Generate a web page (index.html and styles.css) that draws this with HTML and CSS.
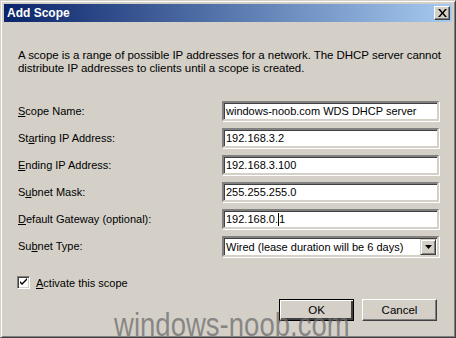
FILE: index.html
```html
<!DOCTYPE html>
<html lang="en">
<head>
  <meta charset="UTF-8">
  <meta name="viewport" content="width=device-width, initial-scale=1.0">
  <title>Add Scope</title>
  <link rel="stylesheet" href="styles.css">
</head>
<body>
  <div class="window">
    <div class="titlebar">
      <span class="title">Add Scope</span>
      <button class="close-button">
        <svg width="9" height="8" viewBox="0 0 9 8">
          <path d="M0 0h2l2.5 3 2.5-3h2l-3.5 4 3.5 4h-2l-2.5-3-2.5 3h-2l3.5-4z" fill="#000"/>
        </svg>
      </button>
    </div>

    <div class="content">
      <p class="intro">A scope is a range of possible IP addresses for a network. The DHCP server cannot<br>distribute IP addresses to clients until a scope is created.</p>

      <!-- Scope fields -->
      <div class="fields">
        <label for="scopeName"><u>S</u>cope Name:</label>
        <div class="textbox" id="scopeName">windows-noob.com WDS DHCP server</div>

        <label for="startIp">St<u>a</u>rting IP Address:</label>
        <div class="textbox" id="startIp">192.168.3.2</div>

        <label for="endIp"><u>E</u>nding IP Address:</label>
        <div class="textbox" id="endIp">192.168.3.100</div>

        <label for="mask">S<u>u</u>bnet Mask:</label>
        <div class="textbox" id="mask">255.255.255.0</div>

        <label for="gateway"><u>D</u>efault Gateway (optional):</label>
        <div class="textbox" id="gateway">192.168.0.<span class="caret"></span>1</div>

        <label for="subnetType">Su<u>b</u>net Type:</label>
        <div class="combo" id="subnetType">
          <span class="combo-text">Wired (lease duration will be 6 days)</span>
          <span class="combo-arrow">
            <svg width="7" height="4" viewBox="0 0 7 4"><path d="M0 0h7l-3.5 4z" fill="#000"/></svg>
          </span>
        </div>
      </div>

      <div class="check-row">
        <span class="checkbox">
          <svg width="9" height="9" viewBox="0 0 9 9"><path d="M1 3l2 2 5-5v2l-5 5-2-2z" fill="#000"/></svg>
        </span>
        <span><u>A</u>ctivate this scope</span>
      </div>

      <div class="buttons">
        <button class="button default">OK</button>
        <button class="button">Cancel</button>
      </div>
    </div>

    <div class="watermark">windows-noob.com</div>
  </div>
</body>
</html>
```

FILE: styles.css
```css
body {
  margin: 0;
  padding: 0;
  background-color: #d4d0c8;
  font-family: "Liberation Sans", Arial, sans-serif;
  font-size: 11px;
  color: #000;
}

.window {
  position: relative;
  box-sizing: border-box;
  width: 456px;
  height: 338px;
  overflow: hidden;
  padding: 3px;
  background-color: #d4d0c8;
  border-top: 1px solid #d4d0c8;
  border-left: 1px solid #d4d0c8;
  border-right: 1px solid #404040;
  border-bottom: 1px solid #404040;
  box-shadow: inset 1px 1px 0 #fff, inset -1px -1px 0 #808080;
}

.titlebar {
  display: flex;
  align-items: center;
  justify-content: space-between;
  height: 18px;
  padding: 0 2px 0 3px;
  background: linear-gradient(to right, #0a246a, #a6caf0);
}

.title {
  color: #fff;
  font-weight: bold;
  font-size: 12px;
}

.close-button {
  display: flex;
  align-items: center;
  justify-content: center;
  width: 16px;
  height: 14px;
  padding: 0;
  background-color: #d4d0c8;
  border: 1px solid;
  border-color: #fff #404040 #404040 #fff;
  box-shadow: inset -1px -1px 0 #808080;
}

.content {
  padding: 0 14px 0 14px;
}

.intro {
  margin: 27px 0 0 0;
  line-height: 13px;
  font-size: 11.5px;
  letter-spacing: -0.05px;
  white-space: nowrap;
}

.fields {
  display: grid;
  grid-template-columns: 204px 217px;
  grid-auto-rows: 20px;
  row-gap: 7px;
  margin-top: 26px;
}

.fields label {
  display: flex;
  align-items: center;
}

.textbox,
.combo {
  box-sizing: border-box;
  display: flex;
  align-items: center;
  height: 20px;
  padding-left: 2px;
  background-color: #fff;
  border: 2px solid;
  border-color: #808080 #d4d0c8 #d4d0c8 #808080;
  box-shadow: inset 1px 1px 0 #404040, inset -1px -1px 0 #fff, 1px 1px 0 #fff;
  white-space: nowrap;
}

.caret {
  display: inline-block;
  width: 1px;
  height: 13px;
  background-color: #000;
}

.combo {
  height: 21px;
  justify-content: space-between;
  padding-right: 1px;
}

.combo-arrow {
  display: flex;
  align-items: center;
  justify-content: center;
  box-sizing: border-box;
  width: 16px;
  height: 16px;
  background-color: #d4d0c8;
  border: 1px solid;
  border-color: #d4d0c8 #404040 #404040 #d4d0c8;
  box-shadow: inset 1px 1px 0 #fff, inset -1px -1px 0 #808080;
}

.check-row {
  display: flex;
  align-items: center;
  gap: 6px;
  height: 15px;
  margin-top: 19px;
  margin-left: -1px;
}

.checkbox {
  box-sizing: border-box;
  display: flex;
  align-items: center;
  justify-content: center;
  width: 13px;
  height: 13px;
  background-color: #fff;
  border: 1px solid;
  border-color: #808080 #fff #fff #808080;
  box-shadow: inset 1px 1px 0 #404040, inset -1px -1px 0 #d4d0c8;
}

.buttons {
  display: flex;
  justify-content: flex-end;
  gap: 8px;
  margin-top: 9px;
  padding-right: 1px;
}

.button {
  box-sizing: border-box;
  width: 75px;
  height: 22px;
  padding: 0;
  font-family: inherit;
  font-size: 11.5px;
  color: #000;
  background-color: #d4d0c8;
  border: 1px solid;
  border-color: #fff #404040 #404040 #fff;
  box-shadow: inset -1px -1px 0 #808080;
}

.button.default {
  border: 1px solid #000;
  box-shadow: inset 1px 1px 0 #fff, inset -2px -2px 0 #404040;
}

.watermark {
  position: absolute;
  left: 113px;
  top: 304px;
  font-family: "Liberation Sans", Arial, sans-serif;
  font-size: 34px;
  color: rgba(110, 110, 110, 0.75);
  white-space: nowrap;
  transform: scaleX(0.81);
  transform-origin: left top;
}
```
